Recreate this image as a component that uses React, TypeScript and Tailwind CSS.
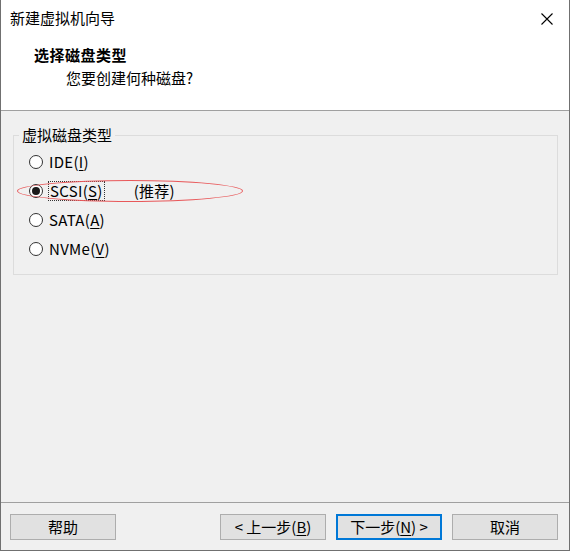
import React from "react";

const font = { fontFamily: '"Noto Sans CJK SC", "Noto Sans", sans-serif' };

function Radio({ checked }: { checked?: boolean }) {
  return (
    <span className="w-[14px] h-[14px] min-w-[14px] rounded-full border border-[#333333] bg-white flex items-center justify-center shrink-0">
      {checked && <span className="w-[8px] h-[8px] rounded-full bg-[#1a1a1a]" />}
    </span>
  );
}

function Btn({ children, primary }: { children: React.ReactNode; primary?: boolean }) {
  return (
    <div
      className={
        "w-[106px] h-[26px] flex items-center justify-center bg-[#e1e1e1] text-[15px] leading-[20px] text-black " +
        (primary ? "border-2 border-[#0078d7]" : "border border-[#adadad]")
      }
    >
      {children}
    </div>
  );
}

export default function App() {
  return (
    <div
      className="relative w-[570px] h-[551px] flex flex-col bg-[#f0f0f0] border-l border-r border-b border-[#707070] text-black"
      style={font}
    >
      {/* header */}
      <div className="h-[111px] bg-white border-b border-[#a0a0a0] flex flex-col shrink-0">
        <div className="h-[36px] flex items-center justify-between pl-[9px] pr-[16px]">
          <span className="text-[15px] leading-[20px]">新建虚拟机向导</span>
          <svg width="12" height="12" viewBox="0 0 12 12" className="mt-[1px]">
            <path d="M0.5 0.5 L11.5 11.5 M11.5 0.5 L0.5 11.5" stroke="#000" strokeWidth="1.1" fill="none" />
          </svg>
        </div>
        <div className="pl-[33px] mt-[9px] text-[15px] leading-[20px] font-bold tracking-[0.5px]">选择磁盘类型</div>
        <div className="pl-[65px] mt-[3px] text-[15px] leading-[20px]">您要创建何种磁盘?</div>
      </div>

      {/* body */}
      <div className="flex-1 flex flex-col">
        <fieldset className="mt-[14px] ml-[12px] mr-[11px] border border-[#dcdcdc] px-0 pb-[11px] m-0">
          <legend className="ml-[5px] px-[3px] text-[15px] leading-[20px]">虚拟磁盘类型</legend>
          <div className="flex flex-col pl-[15px] pt-[2px] tracking-[0.3px]">
            <div className="h-[29px] flex items-center gap-[5px]">
              <Radio />
              <span className="text-[15px] leading-[20px] px-[1px]">
                IDE(<u className="underline-offset-2">I</u>)
              </span>
            </div>
            <div className="h-[29px] flex items-center gap-[5px]">
              <Radio checked />
              <span className="text-[15px] leading-[18px] px-[1px] border border-dotted border-[#333]">
                SCSI(<u className="underline-offset-2">S</u>)
              </span>
              <span className="ml-[24px] text-[15px] leading-[20px]">(推荐)</span>
            </div>
            <div className="h-[29px] flex items-center gap-[5px]">
              <Radio />
              <span className="text-[15px] leading-[20px] px-[1px]">
                SATA(<u className="underline-offset-2">A</u>)
              </span>
            </div>
            <div className="h-[29px] flex items-center gap-[5px]">
              <Radio />
              <span className="text-[15px] leading-[20px] px-[1px]">
                NVMe(<u className="underline-offset-2">V</u>)
              </span>
            </div>
          </div>
        </fieldset>
      </div>

      {/* footer */}
      <div className="h-[48px] border-t border-[#a0a0a0] pt-[11px] pl-[9px] pr-[11px] flex items-start shrink-0">
        <Btn>帮助</Btn>
        <div className="flex-1" />
        <div className="flex gap-[10px]">
          <Btn>
            &lt; 上一步(<u className="underline-offset-2">B</u>)
          </Btn>
          <Btn primary>
            下一步(<u className="underline-offset-2">N</u>) &gt;
          </Btn>
          <Btn>取消</Btn>
        </div>
      </div>

      {/* red annotation ellipse */}
      <div className="absolute left-[16px] top-[180px] w-[226px] h-[22px] rounded-[50%] border border-[#e8585a] pointer-events-none" />
    </div>
  );
}
